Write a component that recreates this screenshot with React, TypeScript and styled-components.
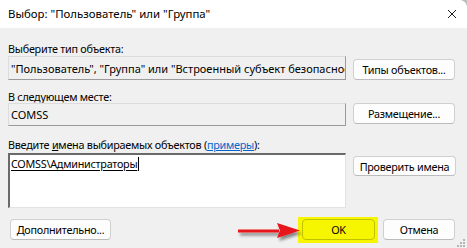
import React from "react";
import styled, { createGlobalStyle } from "styled-components";

const Global = createGlobalStyle`
  html, body { margin: 0; padding: 0; background: #bdbdbd; }
  body { font-family: "Noto Sans", "Open Sans", sans-serif; font-size: 10.8px; letter-spacing: -0.25px; color: #000; }
  * { box-sizing: border-box; }
`;

const Window = styled.div`
  position: relative;
  width: 467px;
  height: 248px;
  display: flex;
  flex-direction: column;
  background: #f0f0f0;
  border-top-right-radius: 8px;
  overflow: hidden;
`;

const TitleBar = styled.div`
  height: 28px;
  flex: none;
  background: #ffffff;
  display: flex;
  align-items: center;
  justify-content: space-between;
  padding: 0 10px 0 8px;
`;

const Title = styled.div`
  font-size: 11.4px;
  letter-spacing: 0;
  line-height: 16px;
`;

const Body = styled.div`
  flex: 1;
  display: flex;
  flex-direction: column;
  padding: 0 12px 0 8px;
`;

const Label = styled.div<{ $mt: number; $h: number }>`
  margin-top: ${(p) => p.$mt}px;
  height: ${(p) => p.$h}px;
  line-height: 15px;
  white-space: nowrap;
`;

const Row = styled.div<{ $mt?: number }>`
  display: flex;
  align-items: flex-start;
  gap: 7px;
  margin-top: ${(p) => p.$mt ?? 0}px;
`;

const ReadField = styled.div<{ $h: number }>`
  width: 338px;
  height: ${(p) => p.$h}px;
  flex: none;
  background: #f0f0f0;
  border: 1px solid #dcdcdc;
  border-right-color: #9a9a9a;
  border-bottom-color: #9a9a9a;
  padding: 0 2px;
  display: flex;
  align-items: center;
  overflow: hidden;
  white-space: nowrap;
  font-size: 11px;
  letter-spacing: 0;
`;

const TextArea = styled.div`
  width: 338px;
  height: 55px;
  flex: none;
  background: #ffffff;
  border: 1px solid #e3e3e3;
  border-top: 2px solid #6a6a6a;
  border-left: 2px solid #6a6a6a;
  padding: 1px 1px;
`;

const Entered = styled.span`
  display: inline-block;
  line-height: 14px;
  text-decoration: underline;
  text-underline-offset: 2px;
  border-right: 1px solid #000;
  padding-right: 1px;
`;

const Button = styled.button<{ $w: number; $mt?: number; $h?: number }>`
  width: ${(p) => p.$w}px;
  height: ${(p) => p.$h ?? 21}px;
  margin-top: ${(p) => p.$mt ?? 0}px;
  flex: none;
  font: inherit;
  letter-spacing: inherit;
  color: #000;
  background: #fdfdfd;
  border: 1px solid #d0d0d0;
  border-bottom-color: #bcbcbc;
  border-radius: 4px;
  padding: 0;
  display: flex;
  align-items: center;
  justify-content: center;
  white-space: nowrap;
`;

const OkButton = styled(Button)`
  background: #f6f600;
  border-color: #c2c200;
`;

const Highlight = styled.div`
  background: #f6f600;
  padding: 2px 3px 3px 4px;
  margin: -2px -3px -3px -4px;
`;

const Footer = styled.div`
  margin-top: 11px;
  display: flex;
  align-items: flex-start;
  padding-left: 2px;
`;

const FooterRight = styled.div`
  margin-left: auto;
  display: flex;
  gap: 8px;
`;

const Link = styled.span`
  color: #0066cc;
  text-decoration: underline;
`;

const Access = styled.span`
  text-decoration: underline;
`;

const ArrowOverlay = styled.svg`
  position: absolute;
  left: 232px;
  top: 218px;
`;

const Grip = styled.svg`
  position: absolute;
  right: 1px;
  bottom: 0px;
`;

export default function App() {
  return (
    <>
      <Global />
      <Window>
        <TitleBar>
          <Title>Выбор: "Пользователь" или "Группа"</Title>
          <svg width="10" height="10" viewBox="0 0 10 10">
            <path d="M1 1 L9 9 M9 1 L1 9" stroke="#1a1a1a" strokeWidth="1" fill="none" />
          </svg>
        </TitleBar>
        <Body>
          <Label $mt={13} $h={15}>Выберите тип объекта:</Label>
          <Row>
            <ReadField $h={24}>"Пользователь", "Группа" или "Встроенный субъект безопасности"</ReadField>
            <Button $w={102} $mt={3}>Типы объектов...</Button>
          </Row>
          <Label $mt={9} $h={14}>В следующем месте:</Label>
          <Row>
            <ReadField $h={23}>COMSS</ReadField>
            <Button $w={102}>Размещение...</Button>
          </Row>
          <Label $mt={11} $h={15}>
            Введите <Access>и</Access>мена выбираемых объектов (<Link>примеры</Link>):
          </Label>
          <Row $mt={1}>
            <TextArea>
              <Entered>COMSS\Администраторы</Entered>
            </TextArea>
            <Button $w={103} $mt={3} $h={20}>Проверить имена</Button>
          </Row>
          <Footer>
            <Button $w={101}>Дополнительно...</Button>
            <FooterRight>
              <Highlight>
                <OkButton $w={73}>OK</OkButton>
              </Highlight>
              <Button $w={72}>Отмена</Button>
            </FooterRight>
          </Footer>
        </Body>
        <ArrowOverlay width="74" height="28" viewBox="0 0 74 28">
          <defs>
            <filter id="sh" x="-20%" y="-40%" width="140%" height="200%">
              <feGaussianBlur in="SourceAlpha" stdDeviation="1.6" />
              <feOffset dx="2" dy="3" result="b" />
              <feComponentTransfer>
                <feFuncA type="linear" slope="0.45" />
              </feComponentTransfer>
              <feMerge>
                <feMergeNode />
                <feMergeNode in="SourceGraphic" />
              </feMerge>
            </filter>
          </defs>
          <g filter="url(#sh)">
            <path d="M6 11.5 L47 11.5 L47 14.5 L6 14.5 Z" fill="#e8141a" />
            <path d="M45 5 L68 12.5 L45 20 L48 12.5 Z" fill="#e8141a" />
          </g>
        </ArrowOverlay>
        <Grip width="10" height="10" viewBox="0 0 10 10">
          <g fill="#b5b5b5">
            <rect x="7" y="1" width="2" height="2" />
            <rect x="4" y="4" width="2" height="2" />
            <rect x="7" y="4" width="2" height="2" />
            <rect x="1" y="7" width="2" height="2" />
            <rect x="4" y="7" width="2" height="2" />
            <rect x="7" y="7" width="2" height="2" />
          </g>
        </Grip>
      </Window>
    </>
  );
}
